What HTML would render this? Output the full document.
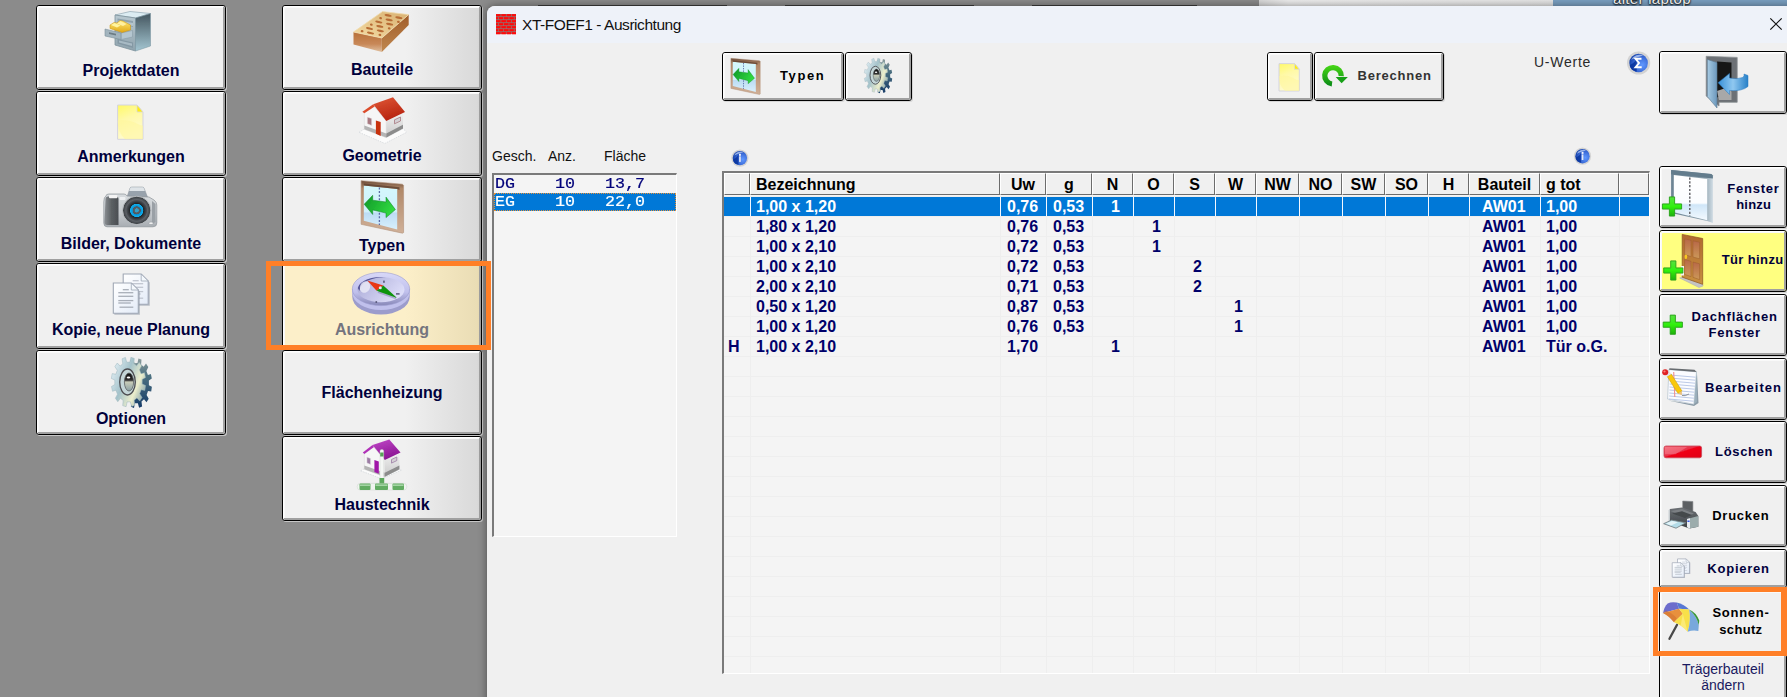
<!DOCTYPE html><html><head><meta charset="utf-8"><title>XT-FOEF1 - Ausrichtung</title><style>
*{box-sizing:border-box;margin:0;padding:0}
html,body{width:1787px;height:697px;overflow:hidden;background:#8b8b8b;font-family:"Liberation Sans",sans-serif;}
body{position:relative}
.abs{position:absolute}
.btn{position:absolute;border:1px solid #000;border-radius:3px;background:#f0f0f0;overflow:hidden;box-shadow:1px 1px 0 rgba(208,208,208,.85)}
.btn:before{content:"";position:absolute;left:0;top:0;right:0;bottom:0;border-top:1px solid #fff;border-left:1px solid #fff;border-right:2px solid #a0a0a0;border-bottom:2px solid #a0a0a0;border-radius:2px;pointer-events:none;box-shadow:inset 1px 1px 0 #f9f9f9}
.mid{background:linear-gradient(90deg,#f0f0f0 0%,#f0f0f0 62%,#d8d8d8 100%)}
.lbl{position:absolute;left:0;right:0;text-align:center;font-weight:bold;font-size:16px;color:#00003c;white-space:nowrap;line-height:18px}
.sl{position:absolute;font-weight:bold;font-size:13px;letter-spacing:1px;white-space:nowrap;line-height:16px;text-align:center}
.t{position:absolute;white-space:nowrap}
svg{position:absolute;overflow:visible}
</style></head><body><div class="abs" style="left:538px;top:5px;width:189px;height:1px;background:#3a3a3a"></div><div class="abs" style="left:785px;top:5px;width:189px;height:1px;background:#3a3a3a"></div><div class="abs" style="left:1032px;top:5px;width:165px;height:1px;background:#3a3a3a"></div>
<div class="abs" style="left:1259px;top:0;width:294px;height:6px;background:linear-gradient(90deg,#d8d8d8,#eeeeee 10%,#e6e6e6)"></div>
<div class="abs" style="left:1553px;top:0;width:234px;height:6px;background:#7ba0c2;overflow:hidden"><div class="t" style="left:60px;top:-10px;color:#fff;font-size:15px;letter-spacing:0.3px;text-shadow:0 1px 2px #000,0 0 2px #000">alter laptop</div></div>
<div class="btn" style="left:36px;top:5px;width:190px;height:85px"><!--L0--><div class="lbl" style="top:56px">Projektdaten</div></div>
<div class="btn" style="left:36px;top:91px;width:190px;height:85px"><!--L1--><div class="lbl" style="top:56px">Anmerkungen</div></div>
<div class="btn" style="left:36px;top:177px;width:190px;height:85px"><!--L2--><div class="lbl" style="top:57px">Bilder, Dokumente</div></div>
<div class="btn" style="left:36px;top:263px;width:190px;height:86px"><!--L3--><div class="lbl" style="top:57px">Kopie, neue Planung</div></div>
<div class="btn" style="left:36px;top:350px;width:190px;height:85px"><!--L4--><div class="lbl" style="top:59px">Optionen</div></div>
<div class="btn mid" style="left:282px;top:5px;width:200px;height:85px;"><!--M0--><div class="lbl" style="top:55px;color:#00003c">Bauteile</div></div>
<div class="btn mid" style="left:282px;top:91px;width:200px;height:85px;"><!--M1--><div class="lbl" style="top:55px;color:#00003c">Geometrie</div></div>
<div class="btn mid" style="left:282px;top:177px;width:200px;height:85px;"><!--M2--><div class="lbl" style="top:59px;color:#00003c">Typen</div></div>
<div class="btn mid" style="left:282px;top:263px;width:200px;height:85px;background:linear-gradient(90deg,#fcefc9 0%,#fcefc9 62%,#e9dcb4 100%);"><!--M3--><div class="lbl" style="top:57px;color:#74747e">Ausrichtung</div></div>
<div class="btn mid" style="left:282px;top:350px;width:200px;height:85px;"><!--M4--><div class="lbl" style="top:33px;color:#00003c">Flächenheizung</div></div>
<div class="btn mid" style="left:282px;top:436px;width:200px;height:85px;"><!--M5--><div class="lbl" style="top:59px;color:#00003c">Haustechnik</div></div>
<div class="abs" style="left:487px;top:6px;width:1310px;height:700px;background:#f0f0f0;border-top-left-radius:8px;overflow:hidden;box-shadow:0 0 9px rgba(0,0,0,.45)"><div style="height:37px;background:#eef2f9"></div></div>
<div class="abs" style="left:266px;top:261px;width:225px;height:89px;border:5px solid #ff7f27"></div>
<div class="t" id="title" style="left:522px;top:15.5px;font-size:15.5px;letter-spacing:-0.45px;line-height:18px;color:#111">XT-FOEF1 - Ausrichtung</div>
<svg style="left:1770px;top:17.7px" width="12" height="12"><path d="M0.3 0.3 L11.7 11.7 M11.7 0.3 L0.3 11.7" stroke="#111" stroke-width="1.2" fill="none"/></svg>
<div class="btn" style="left:722px;top:52px;width:122px;height:49px"><!--TB0--><div class="sl" style="left:57px;top:15px;color:#000;letter-spacing:1.6px">Typen</div></div>
<div class="btn" style="left:845px;top:52px;width:67px;height:49px"><!--TB1--></div>
<div class="btn" style="left:1267px;top:52px;width:46px;height:49px"><!--TB2--></div>
<div class="btn" style="left:1314px;top:52px;width:130px;height:49px"><!--TB3--><div class="sl" style="left:42.5px;top:15px;color:#333;letter-spacing:0.78px">Berechnen</div></div>
<div class="t" id="uw" style="left:1534px;top:54px;font-size:14px;letter-spacing:0.75px;line-height:16px;color:#2a2a2a">U-Werte</div>
<!--SIGMA-->
<div class="btn" style="left:1659px;top:51px;width:128px;height:63px"><!--EXIT--></div>
<div class="t" style="left:492px;top:148px;font-size:14px;line-height:16px;color:#111">Gesch.</div>
<div class="t" style="left:548px;top:148px;font-size:14px;line-height:16px;color:#111">Anz.</div>
<div class="t" style="left:604px;top:148px;font-size:14px;line-height:16px;color:#111">Fläche</div>
<div class="abs" style="left:492px;top:173px;width:185px;height:364px;background:#f4f4f4;border-top:2px solid #7a7a7a;border-left:2px solid #7a7a7a;border-right:1px solid #fff;border-bottom:1px solid #fff;box-shadow:inset 0 0 0 0 #000"></div>
<div class="t" style="left:495px;top:175px;width:181px;height:18px;font-family:'Liberation Mono',monospace;font-size:16.67px;line-height:18px;white-space:pre;-webkit-text-stroke:0.25px;color:#00007a;transform:scaleY(0.87);transform-origin:0 12.7px;">DG    10   13,7</div>
<div class="t" style="left:494px;top:193px;width:182px;height:18px;background:#0078d7;outline:1px dotted #e8923a;outline-offset:-1px"></div>
<div class="t" style="left:495px;top:193px;height:18px;font-family:'Liberation Mono',monospace;font-size:16.67px;line-height:18px;white-space:pre;-webkit-text-stroke:0.25px;color:#fff;transform:scaleY(0.87);transform-origin:0 12.7px;">EG    10   22,0</div>
<!--INFO1-->
<!--INFO2-->
<div class="abs" style="left:722px;top:171px;width:928px;height:503px;background:#f4f4f4;border-top:2px solid #7a7a7a;border-left:2px solid #7a7a7a;border-right:1px solid #fff;border-bottom:1px solid #fff"></div>
<div class="abs" style="left:724px;top:196px;width:925px;height:1px;background:#eeeeee"></div><div class="abs" style="left:724px;top:216px;width:925px;height:1px;background:#eeeeee"></div><div class="abs" style="left:724px;top:236px;width:925px;height:1px;background:#eeeeee"></div><div class="abs" style="left:724px;top:256px;width:925px;height:1px;background:#eeeeee"></div><div class="abs" style="left:724px;top:276px;width:925px;height:1px;background:#eeeeee"></div><div class="abs" style="left:724px;top:296px;width:925px;height:1px;background:#eeeeee"></div><div class="abs" style="left:724px;top:316px;width:925px;height:1px;background:#eeeeee"></div><div class="abs" style="left:724px;top:336px;width:925px;height:1px;background:#eeeeee"></div><div class="abs" style="left:724px;top:356px;width:925px;height:1px;background:#eeeeee"></div><div class="abs" style="left:724px;top:376px;width:925px;height:1px;background:#eeeeee"></div><div class="abs" style="left:724px;top:396px;width:925px;height:1px;background:#eeeeee"></div><div class="abs" style="left:724px;top:416px;width:925px;height:1px;background:#eeeeee"></div><div class="abs" style="left:724px;top:436px;width:925px;height:1px;background:#eeeeee"></div><div class="abs" style="left:724px;top:456px;width:925px;height:1px;background:#eeeeee"></div><div class="abs" style="left:724px;top:476px;width:925px;height:1px;background:#eeeeee"></div><div class="abs" style="left:724px;top:496px;width:925px;height:1px;background:#eeeeee"></div><div class="abs" style="left:724px;top:516px;width:925px;height:1px;background:#eeeeee"></div><div class="abs" style="left:724px;top:536px;width:925px;height:1px;background:#eeeeee"></div><div class="abs" style="left:724px;top:556px;width:925px;height:1px;background:#eeeeee"></div><div class="abs" style="left:724px;top:576px;width:925px;height:1px;background:#eeeeee"></div><div class="abs" style="left:724px;top:596px;width:925px;height:1px;background:#eeeeee"></div><div class="abs" style="left:724px;top:616px;width:925px;height:1px;background:#eeeeee"></div><div class="abs" style="left:724px;top:636px;width:925px;height:1px;background:#eeeeee"></div><div class="abs" style="left:724px;top:656px;width:925px;height:1px;background:#eeeeee"></div><div class="abs" style="left:750px;top:196px;width:1px;height:477px;background:#eeeeee"></div><div class="abs" style="left:1000px;top:196px;width:1px;height:477px;background:#eeeeee"></div><div class="abs" style="left:1046px;top:196px;width:1px;height:477px;background:#eeeeee"></div><div class="abs" style="left:1092px;top:196px;width:1px;height:477px;background:#eeeeee"></div><div class="abs" style="left:1133px;top:196px;width:1px;height:477px;background:#eeeeee"></div><div class="abs" style="left:1174px;top:196px;width:1px;height:477px;background:#eeeeee"></div><div class="abs" style="left:1215px;top:196px;width:1px;height:477px;background:#eeeeee"></div><div class="abs" style="left:1256px;top:196px;width:1px;height:477px;background:#eeeeee"></div><div class="abs" style="left:1299px;top:196px;width:1px;height:477px;background:#eeeeee"></div><div class="abs" style="left:1342px;top:196px;width:1px;height:477px;background:#eeeeee"></div><div class="abs" style="left:1385px;top:196px;width:1px;height:477px;background:#eeeeee"></div><div class="abs" style="left:1428px;top:196px;width:1px;height:477px;background:#eeeeee"></div><div class="abs" style="left:1469px;top:196px;width:1px;height:477px;background:#eeeeee"></div><div class="abs" style="left:1540px;top:196px;width:1px;height:477px;background:#eeeeee"></div><div class="abs" style="left:1619px;top:196px;width:1px;height:477px;background:#eeeeee"></div>
<div class="abs" style="left:724px;top:173px;width:26px;height:22px;background:#f0f0f0;border-left:1px solid #fff;border-top:1px solid #fff;border-right:1px solid #6c6c6c;border-bottom:1px solid #6c6c6c;font-weight:bold;font-size:16px;line-height:21px;color:#000;text-align:center;white-space:nowrap"></div>
<div class="abs" style="left:750px;top:173px;width:250px;height:22px;background:#f0f0f0;border-left:1px solid #fff;border-top:1px solid #fff;border-right:1px solid #6c6c6c;border-bottom:1px solid #6c6c6c;font-weight:bold;font-size:16px;line-height:21px;color:#000;text-align:left;padding-left:5px;white-space:nowrap">Bezeichnung</div>
<div class="abs" style="left:1000px;top:173px;width:46px;height:22px;background:#f0f0f0;border-left:1px solid #fff;border-top:1px solid #fff;border-right:1px solid #6c6c6c;border-bottom:1px solid #6c6c6c;font-weight:bold;font-size:16px;line-height:21px;color:#000;text-align:center;white-space:nowrap">Uw</div>
<div class="abs" style="left:1046px;top:173px;width:46px;height:22px;background:#f0f0f0;border-left:1px solid #fff;border-top:1px solid #fff;border-right:1px solid #6c6c6c;border-bottom:1px solid #6c6c6c;font-weight:bold;font-size:16px;line-height:21px;color:#000;text-align:center;white-space:nowrap">g</div>
<div class="abs" style="left:1092px;top:173px;width:41px;height:22px;background:#f0f0f0;border-left:1px solid #fff;border-top:1px solid #fff;border-right:1px solid #6c6c6c;border-bottom:1px solid #6c6c6c;font-weight:bold;font-size:16px;line-height:21px;color:#000;text-align:center;white-space:nowrap">N</div>
<div class="abs" style="left:1133px;top:173px;width:41px;height:22px;background:#f0f0f0;border-left:1px solid #fff;border-top:1px solid #fff;border-right:1px solid #6c6c6c;border-bottom:1px solid #6c6c6c;font-weight:bold;font-size:16px;line-height:21px;color:#000;text-align:center;white-space:nowrap">O</div>
<div class="abs" style="left:1174px;top:173px;width:41px;height:22px;background:#f0f0f0;border-left:1px solid #fff;border-top:1px solid #fff;border-right:1px solid #6c6c6c;border-bottom:1px solid #6c6c6c;font-weight:bold;font-size:16px;line-height:21px;color:#000;text-align:center;white-space:nowrap">S</div>
<div class="abs" style="left:1215px;top:173px;width:41px;height:22px;background:#f0f0f0;border-left:1px solid #fff;border-top:1px solid #fff;border-right:1px solid #6c6c6c;border-bottom:1px solid #6c6c6c;font-weight:bold;font-size:16px;line-height:21px;color:#000;text-align:center;white-space:nowrap">W</div>
<div class="abs" style="left:1256px;top:173px;width:43px;height:22px;background:#f0f0f0;border-left:1px solid #fff;border-top:1px solid #fff;border-right:1px solid #6c6c6c;border-bottom:1px solid #6c6c6c;font-weight:bold;font-size:16px;line-height:21px;color:#000;text-align:center;white-space:nowrap">NW</div>
<div class="abs" style="left:1299px;top:173px;width:43px;height:22px;background:#f0f0f0;border-left:1px solid #fff;border-top:1px solid #fff;border-right:1px solid #6c6c6c;border-bottom:1px solid #6c6c6c;font-weight:bold;font-size:16px;line-height:21px;color:#000;text-align:center;white-space:nowrap">NO</div>
<div class="abs" style="left:1342px;top:173px;width:43px;height:22px;background:#f0f0f0;border-left:1px solid #fff;border-top:1px solid #fff;border-right:1px solid #6c6c6c;border-bottom:1px solid #6c6c6c;font-weight:bold;font-size:16px;line-height:21px;color:#000;text-align:center;white-space:nowrap">SW</div>
<div class="abs" style="left:1385px;top:173px;width:43px;height:22px;background:#f0f0f0;border-left:1px solid #fff;border-top:1px solid #fff;border-right:1px solid #6c6c6c;border-bottom:1px solid #6c6c6c;font-weight:bold;font-size:16px;line-height:21px;color:#000;text-align:center;white-space:nowrap">SO</div>
<div class="abs" style="left:1428px;top:173px;width:41px;height:22px;background:#f0f0f0;border-left:1px solid #fff;border-top:1px solid #fff;border-right:1px solid #6c6c6c;border-bottom:1px solid #6c6c6c;font-weight:bold;font-size:16px;line-height:21px;color:#000;text-align:center;white-space:nowrap">H</div>
<div class="abs" style="left:1469px;top:173px;width:71px;height:22px;background:#f0f0f0;border-left:1px solid #fff;border-top:1px solid #fff;border-right:1px solid #6c6c6c;border-bottom:1px solid #6c6c6c;font-weight:bold;font-size:16px;line-height:21px;color:#000;text-align:center;white-space:nowrap">Bauteil</div>
<div class="abs" style="left:1540px;top:173px;width:79px;height:22px;background:#f0f0f0;border-left:1px solid #fff;border-top:1px solid #fff;border-right:1px solid #6c6c6c;border-bottom:1px solid #6c6c6c;font-weight:bold;font-size:16px;line-height:21px;color:#000;text-align:left;padding-left:5px;white-space:nowrap">g tot</div>
<div class="abs" style="left:1619px;top:173px;width:30px;height:22px;background:#f0f0f0;border-left:1px solid #fff;border-top:1px solid #fff;border-right:1px solid #6c6c6c;border-bottom:1px solid #6c6c6c;font-weight:bold;font-size:16px;line-height:21px;color:#000;text-align:center;white-space:nowrap"></div>
<div class="abs" style="left:724px;top:197px;width:925px;height:19px;background:#0078d7"></div>
<div class="abs" style="left:750px;top:197px;width:1px;height:19px;background:#f4f8ff"></div>
<div class="abs" style="left:1000px;top:197px;width:1px;height:19px;background:#f4f8ff"></div>
<div class="abs" style="left:1046px;top:197px;width:1px;height:19px;background:#f4f8ff"></div>
<div class="abs" style="left:1092px;top:197px;width:1px;height:19px;background:#f4f8ff"></div>
<div class="abs" style="left:1133px;top:197px;width:1px;height:19px;background:#f4f8ff"></div>
<div class="abs" style="left:1174px;top:197px;width:1px;height:19px;background:#f4f8ff"></div>
<div class="abs" style="left:1215px;top:197px;width:1px;height:19px;background:#f4f8ff"></div>
<div class="abs" style="left:1256px;top:197px;width:1px;height:19px;background:#f4f8ff"></div>
<div class="abs" style="left:1299px;top:197px;width:1px;height:19px;background:#f4f8ff"></div>
<div class="abs" style="left:1342px;top:197px;width:1px;height:19px;background:#f4f8ff"></div>
<div class="abs" style="left:1385px;top:197px;width:1px;height:19px;background:#f4f8ff"></div>
<div class="abs" style="left:1428px;top:197px;width:1px;height:19px;background:#f4f8ff"></div>
<div class="abs" style="left:1469px;top:197px;width:1px;height:19px;background:#f4f8ff"></div>
<div class="abs" style="left:1540px;top:197px;width:1px;height:19px;background:#f4f8ff"></div>
<div class="abs" style="left:1619px;top:197px;width:1px;height:19px;background:#f4f8ff"></div>
<div class="t" style="left:756px;top:197px;font-weight:bold;font-size:16px;line-height:19px;color:#fff">1,00 x 1,20</div>
<div class="t" style="left:1007px;top:197px;font-weight:bold;font-size:16px;line-height:19px;color:#fff">0,76</div>
<div class="t" style="left:1053px;top:197px;font-weight:bold;font-size:16px;line-height:19px;color:#fff">0,53</div>
<div class="t" style="left:1111px;top:197px;font-weight:bold;font-size:16px;line-height:19px;color:#fff">1</div>
<div class="t" style="left:1482px;top:197px;font-weight:bold;font-size:16px;line-height:19px;color:#fff">AW01</div>
<div class="t" style="left:1546px;top:197px;font-weight:bold;font-size:16px;line-height:19px;color:#fff">1,00</div>
<div class="t" style="left:756px;top:217px;font-weight:bold;font-size:16px;line-height:19px;color:#00006a">1,80 x 1,20</div>
<div class="t" style="left:1007px;top:217px;font-weight:bold;font-size:16px;line-height:19px;color:#00006a">0,76</div>
<div class="t" style="left:1053px;top:217px;font-weight:bold;font-size:16px;line-height:19px;color:#00006a">0,53</div>
<div class="t" style="left:1152px;top:217px;font-weight:bold;font-size:16px;line-height:19px;color:#00006a">1</div>
<div class="t" style="left:1482px;top:217px;font-weight:bold;font-size:16px;line-height:19px;color:#00006a">AW01</div>
<div class="t" style="left:1546px;top:217px;font-weight:bold;font-size:16px;line-height:19px;color:#00006a">1,00</div>
<div class="t" style="left:756px;top:237px;font-weight:bold;font-size:16px;line-height:19px;color:#00006a">1,00 x 2,10</div>
<div class="t" style="left:1007px;top:237px;font-weight:bold;font-size:16px;line-height:19px;color:#00006a">0,72</div>
<div class="t" style="left:1053px;top:237px;font-weight:bold;font-size:16px;line-height:19px;color:#00006a">0,53</div>
<div class="t" style="left:1152px;top:237px;font-weight:bold;font-size:16px;line-height:19px;color:#00006a">1</div>
<div class="t" style="left:1482px;top:237px;font-weight:bold;font-size:16px;line-height:19px;color:#00006a">AW01</div>
<div class="t" style="left:1546px;top:237px;font-weight:bold;font-size:16px;line-height:19px;color:#00006a">1,00</div>
<div class="t" style="left:756px;top:257px;font-weight:bold;font-size:16px;line-height:19px;color:#00006a">1,00 x 2,10</div>
<div class="t" style="left:1007px;top:257px;font-weight:bold;font-size:16px;line-height:19px;color:#00006a">0,72</div>
<div class="t" style="left:1053px;top:257px;font-weight:bold;font-size:16px;line-height:19px;color:#00006a">0,53</div>
<div class="t" style="left:1193px;top:257px;font-weight:bold;font-size:16px;line-height:19px;color:#00006a">2</div>
<div class="t" style="left:1482px;top:257px;font-weight:bold;font-size:16px;line-height:19px;color:#00006a">AW01</div>
<div class="t" style="left:1546px;top:257px;font-weight:bold;font-size:16px;line-height:19px;color:#00006a">1,00</div>
<div class="t" style="left:756px;top:277px;font-weight:bold;font-size:16px;line-height:19px;color:#00006a">2,00 x 2,10</div>
<div class="t" style="left:1007px;top:277px;font-weight:bold;font-size:16px;line-height:19px;color:#00006a">0,71</div>
<div class="t" style="left:1053px;top:277px;font-weight:bold;font-size:16px;line-height:19px;color:#00006a">0,53</div>
<div class="t" style="left:1193px;top:277px;font-weight:bold;font-size:16px;line-height:19px;color:#00006a">2</div>
<div class="t" style="left:1482px;top:277px;font-weight:bold;font-size:16px;line-height:19px;color:#00006a">AW01</div>
<div class="t" style="left:1546px;top:277px;font-weight:bold;font-size:16px;line-height:19px;color:#00006a">1,00</div>
<div class="t" style="left:756px;top:297px;font-weight:bold;font-size:16px;line-height:19px;color:#00006a">0,50 x 1,20</div>
<div class="t" style="left:1007px;top:297px;font-weight:bold;font-size:16px;line-height:19px;color:#00006a">0,87</div>
<div class="t" style="left:1053px;top:297px;font-weight:bold;font-size:16px;line-height:19px;color:#00006a">0,53</div>
<div class="t" style="left:1234px;top:297px;font-weight:bold;font-size:16px;line-height:19px;color:#00006a">1</div>
<div class="t" style="left:1482px;top:297px;font-weight:bold;font-size:16px;line-height:19px;color:#00006a">AW01</div>
<div class="t" style="left:1546px;top:297px;font-weight:bold;font-size:16px;line-height:19px;color:#00006a">1,00</div>
<div class="t" style="left:756px;top:317px;font-weight:bold;font-size:16px;line-height:19px;color:#00006a">1,00 x 1,20</div>
<div class="t" style="left:1007px;top:317px;font-weight:bold;font-size:16px;line-height:19px;color:#00006a">0,76</div>
<div class="t" style="left:1053px;top:317px;font-weight:bold;font-size:16px;line-height:19px;color:#00006a">0,53</div>
<div class="t" style="left:1234px;top:317px;font-weight:bold;font-size:16px;line-height:19px;color:#00006a">1</div>
<div class="t" style="left:1482px;top:317px;font-weight:bold;font-size:16px;line-height:19px;color:#00006a">AW01</div>
<div class="t" style="left:1546px;top:317px;font-weight:bold;font-size:16px;line-height:19px;color:#00006a">1,00</div>
<div class="t" style="left:728px;top:337px;font-weight:bold;font-size:16px;line-height:19px;color:#00006a">H</div>
<div class="t" style="left:756px;top:337px;font-weight:bold;font-size:16px;line-height:19px;color:#00006a">1,00 x 2,10</div>
<div class="t" style="left:1007px;top:337px;font-weight:bold;font-size:16px;line-height:19px;color:#00006a">1,70</div>
<div class="t" style="left:1111px;top:337px;font-weight:bold;font-size:16px;line-height:19px;color:#00006a">1</div>
<div class="t" style="left:1482px;top:337px;font-weight:bold;font-size:16px;line-height:19px;color:#00006a">AW01</div>
<div class="t" style="left:1546px;top:337px;font-weight:bold;font-size:16px;line-height:19px;color:#00006a">Tür o.G.</div>
<div class="btn" style="left:1659px;top:166px;width:128px;height:62px;"><!--R0--><div class="sl" style="left:23.48px;width:140px;top:13.8px;color:#00003c;letter-spacing:0.77px">Fenster</div><div class="sl" style="left:23.71px;width:140px;top:30.0px;color:#00003c;letter-spacing:0.22px">hinzu</div></div>
<div class="btn" style="left:1659px;top:230px;width:128px;height:62px;background:#ffff80;"><!--R1--><div class="sl" style="left:22.69px;width:140px;top:21.1px;color:#00003c;letter-spacing:0.38px">Tür hinzu</div></div>
<div class="btn" style="left:1659px;top:294px;width:128px;height:62px;"><!--R2--><div class="sl" style="left:4.61px;width:140px;top:13.5px;color:#00003c;letter-spacing:0.82px">Dachflächen</div><div class="sl" style="left:4.79px;width:140px;top:29.7px;color:#00003c;letter-spacing:0.77px">Fenster</div></div>
<div class="btn" style="left:1659px;top:358px;width:128px;height:62px;"><!--R3--><div class="sl" style="left:13.39px;width:140px;top:20.8px;color:#00003c;letter-spacing:0.98px">Bearbeiten</div></div>
<div class="btn" style="left:1659px;top:421px;width:128px;height:62px;"><!--R4--><div class="sl" style="left:14.14px;width:140px;top:21.5px;color:#00003c;letter-spacing:0.68px">Löschen</div></div>
<div class="btn" style="left:1659px;top:485px;width:128px;height:62px;"><!--R5--><div class="sl" style="left:10.88px;width:140px;top:21.5px;color:#000;letter-spacing:0.75px">Drucken</div></div>
<div class="btn" style="left:1659px;top:549px;width:128px;height:39px;"><!--R6--><div class="sl" style="left:8.58px;width:140px;top:11.0px;color:#00003c;letter-spacing:0.76px">Kopieren</div></div>
<div class="btn" style="left:1659px;top:590px;width:128px;height:64px;"><!--R7--><div class="sl" style="left:10.96px;width:140px;top:14.0px;color:#000;letter-spacing:0.72px">Sonnen-</div><div class="sl" style="left:10.87px;width:140px;top:30.5px;color:#000;letter-spacing:0.34px">schutz</div></div>
<div class="btn" style="left:1659px;top:654px;width:128px;height:62px;"><!--R8--></div>
<div class="t" style="left:1663px;width:120px;text-align:center;top:661px;font-size:14px;line-height:16px;color:#1a1a60">Trägerbauteil<br>ändern</div>
<div class="abs" style="left:1653px;top:587px;width:134px;height:69px;border:5px solid #ff7f27;border-right-width:6px"></div><svg style="left:0;top:0;pointer-events:none" width="1787" height="697" viewBox="0 0 1787 697">
<defs>
<filter id="bl" x="-10%" y="-10%" width="120%" height="120%"><feGaussianBlur stdDeviation="0.45"/></filter>
<filter id="bl2" x="-10%" y="-10%" width="120%" height="120%"><feGaussianBlur stdDeviation="2.6"/></filter>
<linearGradient id="gNote" x1="0" y1="0" x2="0.3" y2="1"><stop offset="0" stop-color="#fffa66"/><stop offset="0.45" stop-color="#fff9a8"/><stop offset="1" stop-color="#fffbd0"/></linearGradient>
<linearGradient id="gCabSide" x1="0" y1="0" x2="0" y2="1"><stop offset="0" stop-color="#44565f"/><stop offset="1" stop-color="#a4c6d2"/></linearGradient>
<linearGradient id="gCabFront" x1="0" y1="0" x2="0" y2="1"><stop offset="0" stop-color="#b8c8d0"/><stop offset="1" stop-color="#8fa3ad"/></linearGradient>
<linearGradient id="gFold" x1="0" y1="0" x2="0" y2="1"><stop offset="0" stop-color="#ffe870"/><stop offset="1" stop-color="#e0a818"/></linearGradient>
<linearGradient id="gCamBody" x1="0" y1="0" x2="0" y2="1"><stop offset="0" stop-color="#d8dcdf"/><stop offset="0.6" stop-color="#c4c8cc"/><stop offset="1" stop-color="#a8adb2"/></linearGradient>
<linearGradient id="gGrip" x1="0" y1="0" x2="1" y2="0"><stop offset="0" stop-color="#8a8e92"/><stop offset="0.5" stop-color="#5c6064"/><stop offset="1" stop-color="#4a4e52"/></linearGradient>
<radialGradient id="gLens"><stop offset="0" stop-color="#35a0c8"/><stop offset="0.14" stop-color="#35a0c8"/><stop offset="0.16" stop-color="#5a5f66"/><stop offset="0.28" stop-color="#50565c"/><stop offset="0.3" stop-color="#0890d0"/><stop offset="0.46" stop-color="#10b0f0"/><stop offset="0.5" stop-color="#202428"/><stop offset="0.72" stop-color="#4a4e54"/><stop offset="0.78" stop-color="#5c6066"/><stop offset="1" stop-color="#3a3e42"/></radialGradient>
<linearGradient id="gDoc" x1="0" y1="0" x2="1" y2="1"><stop offset="0" stop-color="#ffffff"/><stop offset="1" stop-color="#e4ecf8"/></linearGradient>
<linearGradient id="gGearF" x1="0" y1="0.2" x2="1" y2="0.8"><stop offset="0" stop-color="#e4f0f6"/><stop offset="0.4" stop-color="#a4c2ca"/><stop offset="0.72" stop-color="#eceecc"/><stop offset="1" stop-color="#7c9ca8"/></linearGradient>
<linearGradient id="gGearB" x1="0" y1="0" x2="0" y2="1"><stop offset="0" stop-color="#8c9c9c"/><stop offset="0.35" stop-color="#4c7080"/><stop offset="1" stop-color="#163c68"/></linearGradient>
<linearGradient id="gHole" x1="0" y1="0" x2="0" y2="1"><stop offset="0" stop-color="#101010"/><stop offset="0.4" stop-color="#303030"/><stop offset="0.5" stop-color="#c8ccb8"/><stop offset="1" stop-color="#8aa0a4"/></linearGradient>
<linearGradient id="gBrTop" x1="0" y1="1" x2="1" y2="0"><stop offset="0" stop-color="#f4dca4"/><stop offset="1" stop-color="#d8b070"/></linearGradient>
<linearGradient id="gBrFront" x1="0" y1="0" x2="0" y2="1"><stop offset="0" stop-color="#b87038"/><stop offset="0.6" stop-color="#c88858"/><stop offset="1" stop-color="#e0c0a0"/></linearGradient>
<linearGradient id="gBrSide" x1="0" y1="0" x2="0" y2="1"><stop offset="0" stop-color="#a05c28"/><stop offset="1" stop-color="#c08850"/></linearGradient>
<linearGradient id="gRoofR" x1="0" y1="0" x2="0.4" y2="1"><stop offset="0" stop-color="#e05838"/><stop offset="1" stop-color="#b82410"/></linearGradient>
<linearGradient id="gRoofP" x1="0" y1="0" x2="0.4" y2="1"><stop offset="0" stop-color="#c048c8"/><stop offset="1" stop-color="#8c1494"/></linearGradient>
<linearGradient id="gWallR" x1="0" y1="0" x2="0" y2="1"><stop offset="0" stop-color="#f0f0f0"/><stop offset="1" stop-color="#c8c8c8"/></linearGradient>
<linearGradient id="gFrame" x1="0" y1="0" x2="0" y2="1"><stop offset="0" stop-color="#6a4a38"/><stop offset="0.15" stop-color="#b08868"/><stop offset="1" stop-color="#d0b098"/></linearGradient>
<linearGradient id="gGlass" x1="0" y1="0" x2="0" y2="1"><stop offset="0" stop-color="#d4f8fc"/><stop offset="0.6" stop-color="#d0f0fc"/><stop offset="0.62" stop-color="#bcdcf4"/><stop offset="1" stop-color="#d8f0fc"/></linearGradient>
<linearGradient id="gArrow" x1="0" y1="0" x2="1" y2="0.4"><stop offset="0" stop-color="#109828"/><stop offset="1" stop-color="#30d840"/></linearGradient>
<linearGradient id="gComp" x1="0" y1="0" x2="0" y2="1"><stop offset="0" stop-color="#d8d8f8"/><stop offset="0.6" stop-color="#c0c0ec"/><stop offset="1" stop-color="#8888b8"/></linearGradient>
<linearGradient id="gCompIn" x1="0" y1="0" x2="1" y2="0.5"><stop offset="0" stop-color="#9898c8"/><stop offset="0.3" stop-color="#b8b8e0"/><stop offset="1" stop-color="#dcdcf8"/></linearGradient>
<linearGradient id="gRef" x1="0" y1="0" x2="0" y2="1"><stop offset="0" stop-color="#48d818"/><stop offset="1" stop-color="#088818"/></linearGradient>
<radialGradient id="gInfo" cx="0.7" cy="0.6" r="0.8"><stop offset="0" stop-color="#6098ff"/><stop offset="0.5" stop-color="#3c6cd8"/><stop offset="1" stop-color="#0c38a0"/></radialGradient>
<linearGradient id="gDoorLeaf" x1="0" y1="0" x2="1" y2="0"><stop offset="0" stop-color="#a8cce4"/><stop offset="1" stop-color="#6c98bc"/></linearGradient>
<linearGradient id="gBArrow" x1="0" y1="0" x2="1" y2="0"><stop offset="0" stop-color="#3890d8"/><stop offset="0.5" stop-color="#90c8f0"/><stop offset="1" stop-color="#2880c8"/></linearGradient>
<linearGradient id="gWFrame" x1="0" y1="0" x2="1" y2="0"><stop offset="0" stop-color="#6c8494"/><stop offset="0.8" stop-color="#90a4b0"/><stop offset="1" stop-color="#d0dce4"/></linearGradient>
<linearGradient id="gWGlass" x1="0" y1="0" x2="0" y2="1"><stop offset="0" stop-color="#ffffff"/><stop offset="0.62" stop-color="#fbfdff"/><stop offset="0.66" stop-color="#cfe6f8"/><stop offset="1" stop-color="#f4faff"/></linearGradient>
<linearGradient id="gPlus" x1="0" y1="0" x2="0" y2="1"><stop offset="0" stop-color="#58e040"/><stop offset="0.5" stop-color="#30f010"/><stop offset="1" stop-color="#20b010"/></linearGradient>
<linearGradient id="gWood" x1="0" y1="0" x2="0" y2="1"><stop offset="0" stop-color="#b06830"/><stop offset="1" stop-color="#c89040"/></linearGradient>
<linearGradient id="gPanel" x1="0" y1="0" x2="0" y2="1"><stop offset="0" stop-color="#b86848"/><stop offset="1" stop-color="#cc9858"/></linearGradient>
<linearGradient id="gRed" x1="0" y1="0" x2="1" y2="1"><stop offset="0" stop-color="#f05868"/><stop offset="0.45" stop-color="#e83048"/><stop offset="0.5" stop-color="#f00018"/><stop offset="1" stop-color="#e00010"/></linearGradient>
<linearGradient id="gPrn" x1="0" y1="0" x2="0" y2="1"><stop offset="0" stop-color="#6c7074"/><stop offset="1" stop-color="#3c4044"/></linearGradient>
</defs>
<g transform="translate(96,6)" filter="url(#bl)"><polygon points="19.0,9.0 34.0,5.5 54.5,7.5 39.5,12.0" fill="#dcecf2" stroke="#9cb0ba" stroke-width="0.8"/><polygon points="19.0,9.0 39.5,12.0 39.5,45.0 19.0,39.0" fill="url(#gCabFront)" stroke="#7e929c" stroke-width="0.8"/><polygon points="39.5,12.0 54.5,7.5 54.5,40.0 39.5,45.0" fill="url(#gCabSide)" stroke="#7e98a4" stroke-width="0.6"/><polygon points="21.5,12.5 37.0,15.0 37.0,21.0 21.5,18.0" fill="#8ea2ae"/><polygon points="22.5,14.5 37.0,17.0 37.0,20.0 22.5,17.5" fill="#b4c4ce"/><polygon points="21.5,33.0 37.0,36.5 37.0,42.0 21.5,37.5" fill="#8498a4"/><polygon points="23.0,34.5 36.0,37.5 36.0,40.0 23.0,36.5" fill="#a8bac4"/><polygon points="25.0,27.0 36.5,24.5 36.5,31.0 25.0,33.5" fill="#b4c6d0" stroke="#8498a2" stroke-width="0.5"/><polygon points="14.0,19.0 18.0,16.5 21.0,17.0 24.0,14.5 27.0,15.0 34.5,19.0 34.5,24.0 26.0,26.5 14.0,22.5" fill="url(#gFold)" stroke="#c89010" stroke-width="0.5"/><polygon points="15.0,19.0 18.5,17.0 24.5,19.5 21.0,21.5" fill="#fff4a0"/><polygon points="21.0,17.5 24.5,15.2 30.5,18.0 27.0,20.0" fill="#fff0a0"/><polygon points="9.0,23.0 25.0,27.0 25.0,33.5 9.0,30.0" fill="#a2b4be" stroke="#7c909a" stroke-width="0.6"/><polygon points="13.0,26.2 20.0,27.8 20.0,29.6 13.0,28.0" fill="#6c7c86"/></g><g transform="translate(117.6,105)" filter="url(#bl)"><path d="M0,0 H19.4 L25.4,7.0 V34.3 H0 Z" fill="url(#gNote)" stroke="#d4d4e0" stroke-width="1"/><path d="M19.4,0 L25.4,7.0 H19.4 Z" fill="#ffee10" stroke="#d8d8dc" stroke-width="0.8"/><path d="M0,15.4 Q10.2,13.7 17.8,17.8 T25.4,19.9 V34.3 H7.6 Q0,27.4 0,15.4Z" fill="#fff59a" opacity="0.55"/></g><g transform="translate(96,182)" filter="url(#bl)"><path d="M31,15 L34,6 Q34.5,5 36,5 H46 Q47.5,5 48,6 L51.5,15 Z" fill="#98a2ac" stroke="#8a929a" stroke-width="0.5"/><path d="M34,6.5 L35,5.2 H47 L48,6.5 L48.8,9 H33.2 Z" fill="#dfe4e8"/><path d="M10,14 Q10,12 13,12 H28 Q30,12 31,14 L53,15 L58,18 Q60.8,20 60.8,23 V41 Q60.8,44.8 57,44.8 H11 Q7.8,44.8 7.8,41 V20 Q7.8,15 10,14 Z" fill="url(#gCamBody)" stroke="#8c9298" stroke-width="0.7"/><path d="M9.5,17 Q9.5,14.5 12,14.5 H21 Q22.5,14.5 22.5,17 V43 H11 Q8.5,43 8.5,40 Z" fill="url(#gGrip)"/><rect x="13" y="13" width="8.5" height="3.2" rx="1" fill="#f4f4f4"/><rect x="23.5" y="15" width="6" height="3" rx="1" fill="#eef0f2"/><path d="M56,19 L59.5,22 V40 L56,42 Z" fill="#9aa0a6"/><ellipse cx="55" cy="41.3" rx="2.2" ry="1.3" fill="#f0f0f0" stroke="#90969c" stroke-width="0.5"/><circle cx="40.7" cy="28.4" r="13.8" fill="url(#gLens)"/><circle cx="40.7" cy="28.4" r="14.2" fill="none" stroke="#b4b8bc" stroke-width="1"/></g><g transform="translate(123.2,274)" filter="url(#bl)"><g transform="translate(0.0,0.0)"><path d="M1.0,2.0 H19.6 L26.6,8.4 V31.7 H1.0Z" fill="#8c96a4" opacity="0.55"/><path d="M0,0 H18.0 L25.0,7.0 V30.3 H0 Z" fill="url(#gDoc)" stroke="#a0a8b6" stroke-width="1.1"/><path d="M18.0,0 L25.0,7.0 H18.0 Z" fill="#f4f8fc" stroke="#a0a8b6" stroke-width="0.8"/><path d="M9.5,6.7 H15.5" stroke="#c0c6d0" stroke-width="1.3"/><path d="M5.0,9.7 H20.0" stroke="#c0c6d0" stroke-width="1.3"/><path d="M5.0,13.3 H20.0" stroke="#c0c6d0" stroke-width="1.3"/><path d="M5.0,17.6 H20.0" stroke="#c0c6d0" stroke-width="1.3"/><path d="M5.0,20.0 H17.5" stroke="#c0c6d0" stroke-width="1.3"/><path d="M6.2,24.2 H20.0" stroke="#c0c6d0" stroke-width="1.3"/></g><g transform="translate(-9.9,9.0)"><path d="M1.0,2.0 H19.6 L26.6,8.4 V31.7 H1.0Z" fill="#8c96a4" opacity="0.55"/><path d="M0,0 H18.0 L25.0,7.0 V30.3 H0 Z" fill="url(#gDoc)" stroke="#a0a8b6" stroke-width="1.1"/><path d="M18.0,0 L25.0,7.0 H18.0 Z" fill="#f4f8fc" stroke="#a0a8b6" stroke-width="0.8"/><path d="M9.5,6.7 H15.5" stroke="#a8aeb8" stroke-width="1.3"/><path d="M5.0,9.7 H20.0" stroke="#a8aeb8" stroke-width="1.3"/><path d="M5.0,13.3 H20.0" stroke="#a8aeb8" stroke-width="1.3"/><path d="M5.0,17.6 H20.0" stroke="#a8aeb8" stroke-width="1.3"/><path d="M5.0,20.0 H17.5" stroke="#a8aeb8" stroke-width="1.3"/><path d="M6.2,24.2 H20.0" stroke="#a8aeb8" stroke-width="1.3"/></g></g><g transform="translate(111,357) scale(1.0)" filter="url(#bl)"><path d="M37.9,28.2 L40.9,29.7 L40.2,34.6 L37.0,33.9 L35.6,38.0 L37.7,41.7 L35.5,45.3 L33.0,42.2 L30.5,44.6 L31.1,49.4 L28.1,50.8 L26.9,46.2 L23.9,46.3 L23.0,51.0 L19.9,49.8 L20.3,44.9 L17.7,42.6 L15.4,45.9 L13.1,42.5 L15.0,38.5 L13.5,34.5 L10.5,35.5 L9.6,30.8 L12.5,28.8 L12.5,24.2 L9.5,22.7 L10.2,17.8 L13.4,18.5 L14.8,14.4 L12.7,10.7 L14.9,7.1 L17.4,10.2 L19.9,7.8 L19.3,3.0 L22.3,1.6 L23.5,6.2 L26.5,6.1 L27.4,1.4 L30.5,2.6 L30.1,7.5 L32.7,9.8 L35.0,6.5 L37.3,9.9 L35.4,13.9 L36.9,17.9 L39.9,16.9 L40.8,21.6 L37.9,23.6Z" fill="url(#gGearB)"/><path d="M31.2,27.0 L34.6,28.5 L33.8,33.4 L30.2,32.7 L28.7,36.7 L31.1,40.4 L28.7,44.0 L25.9,40.9 L23.2,43.2 L23.9,48.2 L20.6,49.6 L19.3,44.8 L16.1,44.9 L15.1,49.7 L11.7,48.6 L12.2,43.5 L9.4,41.2 L6.8,44.7 L4.4,41.2 L6.5,37.2 L4.9,33.2 L1.5,34.3 L0.5,29.5 L3.8,27.6 L3.8,23.0 L0.4,21.5 L1.2,16.6 L4.8,17.3 L6.3,13.3 L3.9,9.6 L6.3,6.0 L9.1,9.1 L11.8,6.8 L11.1,1.8 L14.4,0.4 L15.7,5.2 L18.9,5.1 L19.9,0.3 L23.3,1.4 L22.8,6.5 L25.6,8.8 L28.2,5.3 L30.6,8.8 L28.5,12.8 L30.1,16.8 L33.5,15.7 L34.5,20.5 L31.2,22.4Z" fill="url(#gGearF)" stroke="#9ab4bc" stroke-width="0.5"/><ellipse cx="16.5" cy="25" rx="7.8" ry="13" fill="#c4d6d8" stroke="#4c4c50" stroke-width="1.3"/><ellipse cx="18" cy="25" rx="4.6" ry="9" fill="url(#gHole)" stroke="#5a5e60" stroke-width="0.8"/><ellipse cx="17.5" cy="20.5" rx="1.8" ry="1.1" fill="#fff"/></g><g transform="translate(346,6)" filter="url(#bl)"><polygon points="7.5,26.0 35.8,32.0 35.8,46.0 7.5,38.5" fill="url(#gBrFront)"/><polygon points="35.8,32.0 62.7,8.6 62.7,19.0 35.8,46.0" fill="url(#gBrSide)"/><polygon points="7.5,26.0 36.5,5.6 62.7,8.6 35.8,32.0" fill="url(#gBrTop)" stroke="#f0dcb0" stroke-width="0.8"/><ellipse cx="16.1" cy="25.2" rx="1.4" ry="1.1" transform="rotate(12.0 16.1 25.2)" fill="#b86c34"/><ellipse cx="24.5" cy="27.0" rx="3.6" ry="1.1" transform="rotate(12.0 24.5 27.0)" fill="#b86c34"/><ellipse cx="33.9" cy="28.9" rx="1.4" ry="1.1" transform="rotate(12.0 33.9 28.9)" fill="#b86c34"/><ellipse cx="23.5" cy="22.5" rx="3.6" ry="1.1" transform="rotate(12.0 23.5 22.5)" fill="#b86c34"/><ellipse cx="34.3" cy="24.8" rx="3.6" ry="1.1" transform="rotate(12.0 34.3 24.8)" fill="#b86c34"/><ellipse cx="25.3" cy="18.6" rx="1.4" ry="1.1" transform="rotate(12.0 25.3 18.6)" fill="#b86c34"/><ellipse cx="33.8" cy="20.4" rx="3.6" ry="1.1" transform="rotate(12.0 33.8 20.4)" fill="#b86c34"/><ellipse cx="43.2" cy="22.4" rx="1.4" ry="1.1" transform="rotate(12.0 43.2 22.4)" fill="#b86c34"/><ellipse cx="32.8" cy="16.0" rx="3.6" ry="1.1" transform="rotate(12.0 32.8 16.0)" fill="#b86c34"/><ellipse cx="43.6" cy="18.2" rx="3.6" ry="1.1" transform="rotate(12.0 43.6 18.2)" fill="#b86c34"/><ellipse cx="34.6" cy="12.1" rx="1.4" ry="1.1" transform="rotate(12.0 34.6 12.1)" fill="#b86c34"/><ellipse cx="43.1" cy="13.9" rx="3.6" ry="1.1" transform="rotate(12.0 43.1 13.9)" fill="#b86c34"/><ellipse cx="52.4" cy="15.9" rx="1.4" ry="1.1" transform="rotate(12.0 52.4 15.9)" fill="#b86c34"/><ellipse cx="42.1" cy="9.4" rx="3.6" ry="1.1" transform="rotate(12.0 42.1 9.4)" fill="#b86c34"/><ellipse cx="52.8" cy="11.7" rx="3.6" ry="1.1" transform="rotate(12.0 52.8 11.7)" fill="#b86c34"/></g><g transform="translate(346,92)" filter="url(#bl)"><polygon points="13.0,40.3 18.3,37.0 40.3,45.5 57.0,36.6 60.8,40.3 38.8,51.5" fill="#fbfbfb" stroke="#d4d8dc" stroke-width="0.8" stroke-dasharray="1.5 1"/><polygon points="18.3,20.9 28.0,14.2 40.3,29.1 40.3,45.5 18.3,37.3" fill="#f6f6f6" stroke="#d8d8d8" stroke-width="0.5"/><polygon points="40.3,29.1 57.0,21.6 57.0,36.6 40.3,45.5" fill="url(#gWallR)"/><polygon points="18.3,33.6 40.3,41.5 40.3,45.5 18.3,37.3" fill="#b4b4b4"/><polygon points="40.3,41.5 57.0,32.8 57.0,36.6 40.3,45.5" fill="#8c8c8c"/><polygon points="21.3,25.0 25.7,26.5 25.7,33.6 21.3,31.7" fill="#a87880" stroke="#e8e8e8" stroke-width="0.5"/><polygon points="48.5,27.8 54.5,25.0 54.5,29.0 48.5,31.8" fill="#d4d0d4" stroke="#a87880" stroke-width="0.8"/><polygon points="29.9,28.4 34.7,29.9 34.7,44.0 29.9,41.8" fill="#c83010"/><polygon points="27.2,12.3 47.0,5.2 59.0,20.1 40.3,29.1" fill="url(#gRoofR)"/><polygon points="16.4,19.8 27.2,12.3 28.7,14.5 18.3,21.3" fill="#dc4c2c"/></g><g transform="translate(361.1,180.7) scale(1.0)" filter="url(#bl)"><polygon points="0.0,0.0 41.4,3.5 42.5,4.8 42.5,51.8 41.4,52.5 0.0,43.6" fill="url(#gFrame)" stroke="#b09078" stroke-width="0.6"/><polygon points="2.7,4.9 36.1,8.4 36.1,48.9 2.7,40.0" fill="url(#gGlass)"/><polygon points="2.7,2.9 38.4,6.5 38.4,9.3 36.1,8.4 2.7,4.9" fill="#5c4030" opacity="0.8"/><path d="M18.3,6.8 V44.3" stroke="#5c6ca8" stroke-width="1.3" stroke-dasharray="2 1.6"/><polygon points="3.1,23.5 11.6,14.6 11.6,19.5 24.9,21.3 24.9,16.4 34.3,28.9 24.9,36.9 24.9,32.4 11.6,29.3 11.6,33.8" fill="url(#gArrow)" stroke="#0c8020" stroke-width="0.5"/></g><g transform="translate(346,266)" filter="url(#bl)"><path d="M6.3,23 V31 A28.7,17.5 0 0 0 63.7,31 V23 Z" fill="#9c9ccc"/><path d="M6.3,27 A28.7,17 0 0 0 63.7,27 V24 H6.3Z" fill="#c0c0ec"/><ellipse cx="35" cy="23" rx="28.7" ry="16.6" fill="url(#gComp)" stroke="#9c9cd0" stroke-width="0.6"/><ellipse cx="35" cy="23.6" rx="23.5" ry="12.6" fill="url(#gCompIn)"/><path d="M11.8,22 A23.5,12.6 0 0 1 40,11.3 A24,13.5 0 0 0 13.5,25 Z" fill="#44448c" opacity="0.85"/><ellipse cx="19" cy="21" rx="5" ry="6" fill="#ececf8" opacity="0.8" transform="rotate(25 19 21)"/><polygon points="31.5,26.5 38.3,21.0 51.6,34.0 32.0,27.0" fill="#8c8cb8" opacity="0.6"/><polygon points="21.3,14.6 37.3,19.4 30.6,24.8" fill="#e83414"/><polygon points="37.3,19.4 51.1,32.1 30.6,24.8" fill="#109410"/><circle cx="34.3" cy="21.7" r="1.5" fill="#e8e8f0"/><rect x="37.2" y="14.6" width="1.5" height="2.2" fill="#505070"/><rect x="29.5" y="35.2" width="1.6" height="1.6" fill="#505070"/><rect x="50" y="27.2" width="3.6" height="1.4" fill="#505070"/></g><g transform="translate(346,438)" filter="url(#bl)"><polygon points="14.6,32.8 18.3,30.8 38.8,38.8 53.4,31.3 55.6,32.1 35.8,40.8" fill="#fbfbfb" stroke="#d4d8dc" stroke-width="0.8" stroke-dasharray="1.5 1"/><polygon points="18.3,16.0 27.6,9.0 38.8,22.0 38.8,38.8 18.3,31.3" fill="#f6f6f6" stroke="#d8d8d8" stroke-width="0.5"/><polygon points="38.8,22.0 53.4,15.7 53.4,31.3 38.8,38.8" fill="url(#gWallR)"/><polygon points="18.3,27.6 38.8,34.8 38.8,38.8 18.3,31.3" fill="#b4b4b4"/><polygon points="38.8,34.8 53.4,27.5 53.4,31.3 38.8,38.8" fill="#8c8c8c"/><polygon points="20.9,19.0 24.6,20.5 24.6,26.5 20.9,25.0" fill="#9c7ca4" stroke="#e8e8e8" stroke-width="0.5"/><polygon points="45.5,21.5 50.8,19.0 50.8,22.6 45.5,25.1" fill="#d4d0d4" stroke="#9c7ca4" stroke-width="0.8"/><polygon points="28.4,22.0 32.8,23.5 32.8,35.8 28.4,34.0" fill="#a018a8"/><polygon points="26.5,7.1 43.3,1.5 54.5,14.6 38.8,22.0" fill="url(#gRoofP)"/><polygon points="16.8,14.6 26.5,7.1 28.0,9.0 18.3,16.0" fill="#b030b8"/></g><g transform="translate(346,438)" filter="url(#bl)"><rect x="34" y="11.5" width="3.7" height="34" rx="1.6" fill="#f4f6f4" stroke="#c8d0c8" stroke-width="0.4"/><rect x="34.2" y="14.5" width="3.3" height="4" fill="#58a058"/><rect x="33.5" y="40" width="4.7" height="6" fill="#5ca85c"/><rect x="11.2" y="45.4" width="49.6" height="6.6" rx="3" fill="#f0f4f0" stroke="#c4ccc4" stroke-width="0.4"/><rect x="13.5" y="45.6" width="11.0" height="6.4" rx="1" fill="#62ac62"/><rect x="14.0" y="46.4" width="10.0" height="1.6" fill="#a4d4a4"/><rect x="29" y="45.6" width="13" height="6.4" rx="1" fill="#62ac62"/><rect x="29.5" y="46.4" width="12" height="1.6" fill="#a4d4a4"/><rect x="46.5" y="45.6" width="11.5" height="6.4" rx="1" fill="#62ac62"/><rect x="47.0" y="46.4" width="10.5" height="1.6" fill="#a4d4a4"/></g><g transform="translate(496,14)"><rect x="0" y="0" width="20" height="20" fill="#8a7878"/><rect x="0.0" y="0.1" width="4.6" height="2.2" fill="#ff0a0a"/><rect x="5.3" y="0.1" width="4.6" height="2.2" fill="#ff0a0a"/><rect x="10.6" y="0.1" width="4.6" height="2.2" fill="#ff0a0a"/><rect x="15.9" y="0.1" width="4.1" height="2.2" fill="#ff0a0a"/><rect x="0.0" y="3.1" width="2.0" height="2.2" fill="#ff0a0a"/><rect x="2.7" y="3.1" width="4.6" height="2.2" fill="#ff0a0a"/><rect x="8.0" y="3.1" width="4.6" height="2.2" fill="#ff0a0a"/><rect x="13.3" y="3.1" width="4.6" height="2.2" fill="#ff0a0a"/><rect x="18.6" y="3.1" width="1.4" height="2.2" fill="#ff0a0a"/><rect x="0.0" y="6.1" width="4.6" height="2.2" fill="#ff0a0a"/><rect x="5.3" y="6.1" width="4.6" height="2.2" fill="#ff0a0a"/><rect x="10.6" y="6.1" width="4.6" height="2.2" fill="#ff0a0a"/><rect x="15.9" y="6.1" width="4.1" height="2.2" fill="#ff0a0a"/><rect x="0.0" y="9.1" width="2.0" height="2.2" fill="#ff0a0a"/><rect x="2.7" y="9.1" width="4.6" height="2.2" fill="#ff0a0a"/><rect x="8.0" y="9.1" width="4.6" height="2.2" fill="#ff0a0a"/><rect x="13.3" y="9.1" width="4.6" height="2.2" fill="#ff0a0a"/><rect x="18.6" y="9.1" width="1.4" height="2.2" fill="#ff0a0a"/><rect x="0.0" y="12.1" width="4.6" height="2.2" fill="#ff0a0a"/><rect x="5.3" y="12.1" width="4.6" height="2.2" fill="#ff0a0a"/><rect x="10.6" y="12.1" width="4.6" height="2.2" fill="#ff0a0a"/><rect x="15.9" y="12.1" width="4.1" height="2.2" fill="#ff0a0a"/><rect x="0.0" y="15.1" width="2.0" height="2.2" fill="#ff0a0a"/><rect x="2.7" y="15.1" width="4.6" height="2.2" fill="#ff0a0a"/><rect x="8.0" y="15.1" width="4.6" height="2.2" fill="#ff0a0a"/><rect x="13.3" y="15.1" width="4.6" height="2.2" fill="#ff0a0a"/><rect x="18.6" y="15.1" width="1.4" height="2.2" fill="#ff0a0a"/><rect x="0.0" y="18.1" width="4.6" height="2.2" fill="#ff0a0a"/><rect x="5.3" y="18.1" width="4.6" height="2.2" fill="#ff0a0a"/><rect x="10.6" y="18.1" width="4.6" height="2.2" fill="#ff0a0a"/><rect x="15.9" y="18.1" width="4.1" height="2.2" fill="#ff0a0a"/></g><g transform="translate(730.9,58.3) scale(0.69)" filter="url(#bl)"><polygon points="0.0,0.0 41.4,3.5 42.5,4.8 42.5,51.8 41.4,52.5 0.0,43.6" fill="url(#gFrame)" stroke="#b09078" stroke-width="0.6"/><polygon points="2.7,4.9 36.1,8.4 36.1,48.9 2.7,40.0" fill="url(#gGlass)"/><polygon points="2.7,2.9 38.4,6.5 38.4,9.3 36.1,8.4 2.7,4.9" fill="#5c4030" opacity="0.8"/><path d="M18.3,6.8 V44.3" stroke="#5c6ca8" stroke-width="1.3" stroke-dasharray="2 1.6"/><polygon points="3.1,23.5 11.6,14.6 11.6,19.5 24.9,21.3 24.9,16.4 34.3,28.9 24.9,36.9 24.9,32.4 11.6,29.3 11.6,33.8" fill="url(#gArrow)" stroke="#0c8020" stroke-width="0.5"/></g><g transform="translate(864,58) scale(0.69)" filter="url(#bl)"><path d="M37.9,28.2 L40.9,29.7 L40.2,34.6 L37.0,33.9 L35.6,38.0 L37.7,41.7 L35.5,45.3 L33.0,42.2 L30.5,44.6 L31.1,49.4 L28.1,50.8 L26.9,46.2 L23.9,46.3 L23.0,51.0 L19.9,49.8 L20.3,44.9 L17.7,42.6 L15.4,45.9 L13.1,42.5 L15.0,38.5 L13.5,34.5 L10.5,35.5 L9.6,30.8 L12.5,28.8 L12.5,24.2 L9.5,22.7 L10.2,17.8 L13.4,18.5 L14.8,14.4 L12.7,10.7 L14.9,7.1 L17.4,10.2 L19.9,7.8 L19.3,3.0 L22.3,1.6 L23.5,6.2 L26.5,6.1 L27.4,1.4 L30.5,2.6 L30.1,7.5 L32.7,9.8 L35.0,6.5 L37.3,9.9 L35.4,13.9 L36.9,17.9 L39.9,16.9 L40.8,21.6 L37.9,23.6Z" fill="url(#gGearB)"/><path d="M31.2,27.0 L34.6,28.5 L33.8,33.4 L30.2,32.7 L28.7,36.7 L31.1,40.4 L28.7,44.0 L25.9,40.9 L23.2,43.2 L23.9,48.2 L20.6,49.6 L19.3,44.8 L16.1,44.9 L15.1,49.7 L11.7,48.6 L12.2,43.5 L9.4,41.2 L6.8,44.7 L4.4,41.2 L6.5,37.2 L4.9,33.2 L1.5,34.3 L0.5,29.5 L3.8,27.6 L3.8,23.0 L0.4,21.5 L1.2,16.6 L4.8,17.3 L6.3,13.3 L3.9,9.6 L6.3,6.0 L9.1,9.1 L11.8,6.8 L11.1,1.8 L14.4,0.4 L15.7,5.2 L18.9,5.1 L19.9,0.3 L23.3,1.4 L22.8,6.5 L25.6,8.8 L28.2,5.3 L30.6,8.8 L28.5,12.8 L30.1,16.8 L33.5,15.7 L34.5,20.5 L31.2,22.4Z" fill="url(#gGearF)" stroke="#9ab4bc" stroke-width="0.5"/><ellipse cx="16.5" cy="25" rx="7.8" ry="13" fill="#c4d6d8" stroke="#4c4c50" stroke-width="1.3"/><ellipse cx="18" cy="25" rx="4.6" ry="9" fill="url(#gHole)" stroke="#5a5e60" stroke-width="0.8"/><ellipse cx="17.5" cy="20.5" rx="1.8" ry="1.1" fill="#fff"/></g><g transform="translate(1279,63.6)" filter="url(#bl)"><path d="M0,0 H15.5 L20.3,5.6 V27.4 H0 Z" fill="url(#gNote)" stroke="#d4d4e0" stroke-width="1"/><path d="M15.5,0 L20.3,5.6 H15.5 Z" fill="#ffee10" stroke="#d8d8dc" stroke-width="0.8"/><path d="M0,12.3 Q8.1,11.0 14.2,14.3 T20.3,15.9 V27.4 H6.1 Q0,22.0 0,12.3Z" fill="#fff59a" opacity="0.55"/></g><g filter="url(#bl)"><path d="M1331.7,86.6 A10.9,10.9 0 1 1 1343.9,76.2 L1338.6,76.0 A5.6,5.6 0 1 0 1332.3,81.4 Z" fill="url(#gRef)"/><polygon points="1335.7,77.1 1347.9,77.1 1341.6,83.2" fill="#18a018"/></g><g filter="url(#bl)"><circle cx="1638.6" cy="63" r="11.600000000000001" fill="#cfcfcf" opacity="0.9"/><circle cx="1638.6" cy="63" r="9.3" fill="url(#gInfo)"/><path d="M1629.8,64.9 Q1635.8,62.1 1636.7,57.9 L1636.7,71.4 Q1630.2,70.4 1629.8,64.9Z" fill="#0a349c" opacity="0.85"/><path d="M1631.2,59.7 A9.3,9.3 0 0 1 1643.2,55.6 Q1635.8,57.4 1631.2,59.7Z" fill="#c8d8f8" opacity="0.7"/><path d="M1641.5,58.7 H1635.5 L1639.0,63 L1635.5,67.3 H1641.7" fill="none" stroke="#fff" stroke-width="1.9" stroke-linejoin="miter"/></g><g transform="translate(1620,46)" filter="url(#bl)"><polygon points="86.2,10.3 117.2,11.4 117.2,56.3 99.0,56.3 99.0,60.0 86.2,50.0" fill="#6c7074" stroke="#8c9094" stroke-width="0.8"/><polygon points="97.0,15.5 111.5,16.5 111.5,45.4 97.0,51.6" fill="#181818"/><polygon points="97.0,45.0 111.5,40.0 111.5,54.0 99.0,54.0" fill="#a8a8a8"/><polygon points="87.3,13.4 97.0,16.5 97.0,62.0 87.3,50.6" fill="url(#gDoorLeaf)" stroke="#5c7890" stroke-width="0.6"/><path d="M98.1,36.7 L109.5,27.4 V32 Q118,33.5 122.5,31.5 Q124.8,30 124,28 L128,29.5 V40.5 Q122,45.5 109.5,44.5 V48.5 Z" fill="url(#gBArrow)" stroke="#2878c0" stroke-width="0.5"/></g><g filter="url(#bl)"><circle cx="739.9" cy="158.1" r="8.6" fill="#cfcfcf" opacity="0.9"/><circle cx="739.9" cy="158.1" r="7.2" fill="url(#gInfo)"/><path d="M733.1,159.5 Q737.7,157.4 738.5,154.1 L738.5,164.6 Q733.4,163.9 733.1,159.5Z" fill="#0a349c" opacity="0.85"/><path d="M734.1,155.6 A7.2,7.2 0 0 1 743.5,152.3 Q737.7,153.8 734.1,155.6Z" fill="#c8d8f8" opacity="0.7"/><rect x="739.0" y="153.8" width="1.9" height="2" fill="#f4f6ff"/><rect x="739.1" y="156.3" width="1.7" height="5.6" fill="#e4e8f4"/></g><g filter="url(#bl)"><circle cx="1582.5" cy="156.2" r="8.6" fill="#cfcfcf" opacity="0.9"/><circle cx="1582.5" cy="156.2" r="7.2" fill="url(#gInfo)"/><path d="M1575.7,157.6 Q1580.3,155.5 1581.1,152.2 L1581.1,162.7 Q1576.0,162.0 1575.7,157.6Z" fill="#0a349c" opacity="0.85"/><path d="M1576.7,153.7 A7.2,7.2 0 0 1 1586.1,150.4 Q1580.3,151.9 1576.7,153.7Z" fill="#c8d8f8" opacity="0.7"/><rect x="1581.6" y="151.9" width="1.9" height="2" fill="#f4f6ff"/><rect x="1581.7" y="154.4" width="1.7" height="5.6" fill="#e4e8f4"/></g><g transform="translate(1660,166)" filter="url(#bl)"><polygon points="11.1,4.0 51.5,8.0 52.9,9.5 52.9,57.0 47.2,55.0 11.1,47.0" fill="url(#gWFrame)"/><polygon points="11.1,4.0 51.5,8.0 52.9,9.5 52.9,12.6 11.1,8.2" fill="#647c8c"/><polygon points="13.8,8.9 47.2,12.9 47.2,54.3 13.8,46.3" fill="url(#gWGlass)"/><path d="M29.8,11.5 V50" stroke="#5c5c60" stroke-width="1.4" stroke-dasharray="2.2 1.6"/></g><g filter="url(#bl)"><path d="M1669.4,196.9 h5.2 v7.0 h7.0 v5.2 h-7.0 v7.0 h-5.2 v-7.0 h-7.0 v-5.2 h7.0Z" fill="url(#gPlus)" stroke="#28a018" stroke-width="0.9" stroke-linejoin="round"/></g><g transform="translate(1660,230)" filter="url(#bl)"><polygon points="19.6,48.0 23.0,47.0 43.0,54.5 43.0,56.0 39.0,57.5" fill="#c4c4c4" stroke="#a8a8a8" stroke-width="0.5"/><polygon points="22.2,4.4 42.7,8.5 42.7,54.3 22.2,47.2" fill="url(#gWood)" stroke="#8c5420" stroke-width="0.7"/><polygon points="24.6,8.8 31.0,10.2 31.0,26.5 24.6,24.6" fill="url(#gPanel)" stroke="#9c5c2c" stroke-width="0.5"/><polygon points="33.0,10.8 39.6,12.2 39.6,28.8 33.0,27.0" fill="url(#gPanel)" stroke="#9c5c2c" stroke-width="0.5"/><polygon points="24.6,29.5 31.0,31.3 31.0,46.6 24.6,44.4" fill="url(#gPanel)" stroke="#9c5c2c" stroke-width="0.5"/><polygon points="33.0,32.0 39.6,33.8 39.6,49.6 33.0,47.3" fill="url(#gPanel)" stroke="#9c5c2c" stroke-width="0.5"/><ellipse cx="25.9" cy="26.8" rx="1.3" ry="2.4" fill="#f8c820"/><rect x="21" y="36" width="3" height="9.5" fill="#f4f4f0"/></g><g filter="url(#bl)"><path d="M1670.7,260.9 h5.2 v7.0 h7.0 v5.2 h-7.0 v7.0 h-5.2 v-7.0 h-7.0 v-5.2 h7.0Z" fill="url(#gPlus)" stroke="#28a018" stroke-width="0.9" stroke-linejoin="round"/></g><g filter="url(#bl)"><path d="M1670.2,315.09999999999997 h5.2 v7.0 h7.0 v5.2 h-7.0 v7.0 h-5.2 v-7.0 h-7.0 v-5.2 h7.0Z" fill="url(#gPlus)" stroke="#28a018" stroke-width="0.9" stroke-linejoin="round"/></g><g transform="translate(1660,358)" filter="url(#bl)"><polygon points="8.2,42.5 34.0,48.0 38.5,45.0 36.9,13.8 33.8,46.3" fill="#8c9ca8"/><polygon points="33.8,46.3 36.9,44.0 36.9,13.8 36.5,13.8" fill="#9cb0bc"/><polygon points="8.9,11.6 36.5,13.8 33.8,46.3 7.6,41.0" fill="#fbfcff" stroke="#a8b8c4" stroke-width="0.6"/><path d="M10.0,17.0 L35.5,19.2" stroke="#b4c4e4" stroke-width="0.9"/><path d="M9.9,20.0 L35.2,22.2" stroke="#b4c4e4" stroke-width="0.9"/><path d="M9.8,23.0 L35.0,25.2" stroke="#b4c4e4" stroke-width="0.9"/><path d="M9.6,26.0 L34.8,28.2" stroke="#b4c4e4" stroke-width="0.9"/><path d="M9.5,29.0 L34.5,31.2" stroke="#b4c4e4" stroke-width="0.9"/><path d="M9.4,32.0 L34.2,34.2" stroke="#b4c4e4" stroke-width="0.9"/><path d="M9.3,35.0 L34.0,37.2" stroke="#b4c4e4" stroke-width="0.9"/><path d="M9.2,38.0 L33.8,40.2" stroke="#b4c4e4" stroke-width="0.9"/><path d="M9.0,41.0 L33.5,43.2" stroke="#b4c4e4" stroke-width="0.9"/><path d="M13.7,14 L14.8,39" stroke="#f09090" stroke-width="1.1"/><polygon points="9.5,10.2 34.5,11.8 36.6,13.9 9.0,11.8" fill="#686c70"/><polygon points="7.2,18.5 11.2,16.0 22.0,33.0 18.0,35.5" fill="#f8c808" stroke="#c89808" stroke-width="0.5"/><polygon points="18.0,35.5 22.0,33.0 21.8,37.2" fill="#e8c080"/><polygon points="5.2,16.0 9.4,13.4 11.2,16.0 7.2,18.5" fill="#e4e4e8"/><circle cx="5.2" cy="14.3" r="3" fill="#e02020"/><circle cx="4.5" cy="13.5" r="1.1" fill="#f88080"/><path d="M22,37.5 Q25,38.5 29,36" stroke="#909498" stroke-width="1" fill="none"/></g><g filter="url(#bl)"><rect x="1664" y="446" width="37.6" height="11.8" rx="2" fill="url(#gRed)" stroke="#c84858" stroke-width="0.8"/><path d="M1665,447 H1687.3 L1675.3,454.3 H1665Z" fill="#ffb0b8" opacity="0.35"/></g><g transform="translate(1660,485)" filter="url(#bl)"><polygon points="22.7,16.0 32.9,16.5 32.9,27.5 22.7,25.5" fill="#5c5e62" stroke="#84888c" stroke-width="0.6"/><polygon points="9.8,24.0 22.0,22.5 35.6,27.1 38.3,31.1 38.3,41.8 29.4,43.6 9.8,36.6" fill="url(#gPrn)"/><polygon points="10.5,26.0 22.0,24.0 34.0,28.5 26.0,32.0" fill="#7c8084"/><polygon points="12.0,28.5 22.0,26.2 32.0,30.0 25.0,33.0" fill="#44484c"/><polygon points="27.0,34.0 38.3,31.1 38.3,41.8 29.4,43.6 27.0,42.0" fill="#9cacac"/><polygon points="27.0,34.0 30.0,33.2 30.0,43.4 29.4,43.6 27.0,42.0" fill="#e8ecf0"/><rect x="27.4" y="35.5" width="2.2" height="1.5" fill="#3858e0"/><polygon points="8.6,25.5 9.8,24.0 9.8,36.6 8.6,36.0" fill="#c4ccd0"/><polygon points="3.6,38.7 11.6,35.1 25.8,37.8 16.0,43.2" fill="#b4dce8" stroke="#70787c" stroke-width="0.8"/><polygon points="6.0,38.6 12.0,36.0 18.0,37.2 11.0,40.5" fill="#e4f4f8"/></g><g transform="translate(1677.5,558.9)" filter="url(#bl)"><g transform="translate(0.0,0.0)"><path d="M0.5,1.0 H9.4 L12.8,4.0 V15.2 H0.5Z" fill="#8c96a4" opacity="0.55"/><path d="M0,0 H8.6 L12.0,3.4 V14.5 H0 Z" fill="url(#gDoc)" stroke="#a0a8b6" stroke-width="0.7"/><path d="M8.6,0 L12.0,3.4 H8.6 Z" fill="#f4f8fc" stroke="#a0a8b6" stroke-width="0.5"/><path d="M4.6,3.2 H7.4" stroke="#c0c6d0" stroke-width="0.6"/><path d="M2.4,4.7 H9.6" stroke="#c0c6d0" stroke-width="0.6"/><path d="M2.4,6.4 H9.6" stroke="#c0c6d0" stroke-width="0.6"/><path d="M2.4,8.4 H9.6" stroke="#c0c6d0" stroke-width="0.6"/><path d="M2.4,9.6 H8.4" stroke="#c0c6d0" stroke-width="0.6"/><path d="M3.0,11.6 H9.6" stroke="#c0c6d0" stroke-width="0.6"/></g><g transform="translate(-5.3,3.8)"><path d="M0.5,1.0 H9.4 L12.8,4.0 V15.2 H0.5Z" fill="#8c96a4" opacity="0.55"/><path d="M0,0 H8.6 L12.0,3.4 V14.5 H0 Z" fill="url(#gDoc)" stroke="#a0a8b6" stroke-width="0.7"/><path d="M8.6,0 L12.0,3.4 H8.6 Z" fill="#f4f8fc" stroke="#a0a8b6" stroke-width="0.5"/><path d="M4.6,3.2 H7.4" stroke="#a8aeb8" stroke-width="0.6"/><path d="M2.4,4.7 H9.6" stroke="#a8aeb8" stroke-width="0.6"/><path d="M2.4,6.4 H9.6" stroke="#a8aeb8" stroke-width="0.6"/><path d="M2.4,8.4 H9.6" stroke="#a8aeb8" stroke-width="0.6"/><path d="M2.4,9.6 H8.4" stroke="#a8aeb8" stroke-width="0.6"/><path d="M3.0,11.6 H9.6" stroke="#a8aeb8" stroke-width="0.6"/></g></g><g transform="translate(1660,549) scale(0.1522)" filter="url(#bl2)"><path d="M112,498 L62,590" stroke="#484848" stroke-width="15" stroke-linecap="round"/><path d="M20,420 Q28,380 50,358 Q75,345 110,352 L125,392 Z" fill="#6c6ccc"/><path d="M110,352 Q155,362 192,398 L125,392 Z" fill="#5878d4"/><path d="M20,420 L125,392 L150,425 L92,482 Q60,440 20,420 Z" fill="#e8903c"/><path d="M125,392 L192,398 Q205,470 182,543 Q140,500 92,482 L150,425 Z" fill="#f8e048"/><path d="M192,398 Q240,440 255,500 L252,538 Q215,530 182,543 Q205,470 192,398 Z" fill="#78a8dc"/><path d="M192,398 Q235,415 258,470 L255,500 Q240,440 192,398 Z" fill="#389838"/><path d="M20,420 Q60,440 92,482 L110,455 Q75,415 40,405 Z" fill="#d07030" opacity="0.55"/><path d="M150,425 L182,543 Q160,520 135,505 Z" fill="#fff4a0" opacity="0.5"/></g></svg></body></html>
